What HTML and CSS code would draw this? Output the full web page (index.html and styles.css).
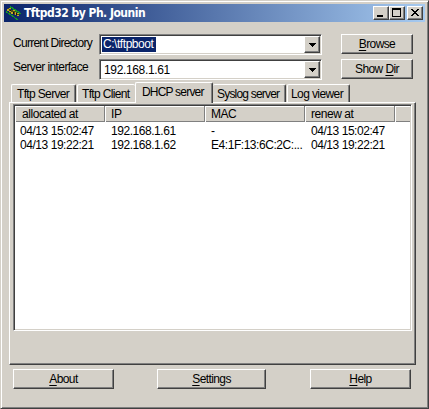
FILE: index.html
```html
<!DOCTYPE html>
<html lang="en">
<head>
<meta charset="utf-8">
<title>Tftpd32 by Ph. Jounin</title>
<link rel="stylesheet" href="styles.css">
</head>
<body>
<main class="window">
  <header class="titlebar">
    <svg class="app-icon" width="16" height="16" viewBox="0 0 16 16" shape-rendering="crispEdges">
      <path d="M2 3h3v2h3v1h3v2h2v3h-2v-1H8V9H6V8H3V6H2z" fill="#4a4a1c"/>
      <path d="M1 4h2v2H1zM3 3h2v1H3zM3 6h2v1H3zM5 7h2v2H5zM7 5h2v1H7zM9 7h1v3H9zM11 8h2v1h-2zM11 10h2v1h-2z" fill="#c0ac20"/>
      <path d="M4 5h1v1H4zM7 7h1v2H7zM10 8h1v2h-1z" fill="#111"/>
      <path d="M4 1h1v1h2v1h1v1h2v1h1v1h2v1h1v1h1v1h-2V8h-1V7h-2V6H9V5H7V4H6V3H4zM0 6h1v1h1v1h2v1h1v1h2v1h1v1h1v1h2v1h1v1h-2v-1H9v-1H8v-1H6v-1H5v-1H3V9H2V8H0z" fill="#129d20"/>
    </svg>
    <h1 class="title">Tftpd32 by Ph. Jounin</h1>
    <div class="controls">
      <button class="control" aria-label="Minimize"><svg width="12" height="10" shape-rendering="crispEdges"><path d="M2 7h6v2H2z"/></svg></button>
      <button class="control" aria-label="Maximize"><svg width="12" height="10" shape-rendering="crispEdges"><path fill-rule="evenodd" d="M1 0h9v9H1zM2 2v6h7V2z"/></svg></button>
      <button class="control close" aria-label="Close"><svg width="12" height="10" shape-rendering="crispEdges"><path d="M2 1h2v1h1v1h2V2h1V1h2v1H9v1H8v1H7v1h1v1h1v1h1v1H8V7H7V6H5v1H4v1H2V7h1V6h1V5h1V4H4V3H3V2H2z"/></svg></button>
    </div>
  </header>

  <section class="form">
    <div class="form-row">
      <label class="label directory-label">Current Directory</label>
      <div class="combo"><span class="value selected">C:\tftpboot</span><button class="arrow" aria-label="Open"><svg width="7" height="4" shape-rendering="crispEdges"><path d="M0 0h7v1H6v1H5v1H4v1H3V3H2V2H1V1H0z"/></svg></button></div>
      <button class="button side"><span><u>B</u>rowse</span></button>
    </div>
    <div class="form-row">
      <label class="label interface-label">Server interface</label>
      <div class="combo"><span class="value address">192.168.1.61</span><button class="arrow" aria-label="Open"><svg width="7" height="4" shape-rendering="crispEdges"><path d="M0 0h7v1H6v1H5v1H4v1H3V3H2V2H1V1H0z"/></svg></button></div>
      <button class="button side"><span>Show <u>D</u>ir</span></button>
    </div>
  </section>

  <nav class="tabs">
    <div class="tab tab-server">Tftp Server</div>
    <div class="tab tab-client">Tftp Client</div>
    <div class="tab tab-dhcp active">DHCP server</div>
    <div class="tab tab-syslog">Syslog server</div>
    <div class="tab tab-log">Log viewer</div>
  </nav>
  <section class="panel">
    <div class="list">
      <div class="row head"><span>allocated at</span><span>IP</span><span>MAC</span><span>renew at</span><span></span></div>
      <div class="row"><span>04/13 15:02:47</span><span>192.168.1.61</span><span>-</span><span>04/13 15:02:47</span></div>
      <div class="row"><span>04/13 19:22:21</span><span>192.168.1.62</span><span class="mac">E4:1F:13:6C:2C:...</span><span>04/13 19:22:21</span></div>
    </div>
  </section>

  <footer class="actions">
    <button class="button about"><span><u>A</u>bout</span></button>
    <button class="button settings"><span><u>S</u>ettings</span></button>
    <button class="button help"><span><u>H</u>elp</span></button>
  </footer>
</main>
</body>
</html>
```
FILE: styles.css
```css
* { box-sizing: border-box; }
body {
  margin: 0;
  font: 12px/14px "Liberation Sans", Arial, sans-serif;
  letter-spacing: -0.45px;
  color: #000;
}
button { font: inherit; letter-spacing: inherit; color: inherit; padding: 0; }
.window {
  width: 429px;
  height: 409px;
  padding: 2px;
  display: flex;
  flex-direction: column;
  background: #d4d0c8;
  border: 1px solid;
  border-color: #d4d0c8 #404040 #404040 #d4d0c8;
  box-shadow: inset 1px 1px #fff, inset -1px -1px #808080;
}
.titlebar {
  display: flex;
  align-items: center;
  height: 18px;
  margin: 1px 1px 0 1px;
  padding: 0 2px 0 2px;
  background: linear-gradient(90deg, #0a246a, #a6caf0);
}
.title {
  flex: 1;
  margin: 0 0 0 2px;
  color: #fff;
  font: bold 12px/18px "DejaVu Sans Condensed", "DejaVu Sans", sans-serif;
  letter-spacing: -0.5px;
  white-space: nowrap;
}
.controls { display: flex; }
.control {
  width: 16px;
  height: 14px;
  display: flex;
  background: #d4d0c8;
  border: 1px solid;
  border-color: #fff #404040 #404040 #fff;
  box-shadow: inset -1px -1px #808080;
  padding: 1px;
}
.close { margin-left: 2px; }

.form { display: flex; flex-direction: column; gap: 4px; margin: 12px 0 0 10px; }
.form-row { display: flex; height: 21px; }
.label { width: 86px; padding-top: 2px; white-space: nowrap; }
.directory-label { letter-spacing: -0.73px; padding-top: 2px; }
.interface-label { letter-spacing: -0.6px; padding-top: 1px; }
.combo {
  display: flex;
  width: 223px;
  height: 21px;
  padding: 1px;
  background: #fff;
  border: 1px solid;
  border-color: #808080 #fff #fff #808080;
  box-shadow: inset 1px 1px #404040, inset -1px -1px #d4d0c8;
}
.value { flex: 1; margin: 1px; padding: 1px 0 0 2px; line-height: 15px; }
.address { letter-spacing: -0.35px; }
.selected { flex: none; height: 15px; padding: 0 0 0 1px; background: #0a246a; color: #fff; width: 54px; margin-right: auto; }
.arrow, .button {
  display: flex;
  align-items: center;
  justify-content: center;
  background: #d4d0c8;
  border: 1px solid;
  border-color: #fff #404040 #404040 #fff;
  box-shadow: inset -1px -1px #808080;
}
.arrow { width: 16px; height: 17px; }
.button { height: 20px; letter-spacing: -0.6px; }
.side { width: 72px; margin-left: 19px; }
u { text-underline-offset: 2px; text-decoration-thickness: 1px; }

.tabs { display: flex; align-items: flex-end; height: 20px; margin: 2px 0 0 8px; position: relative; }
.tab {
  height: 18px;
  padding: 2px 0 0 5px;
  white-space: nowrap;
  border: 1px solid;
  border-color: #fff #404040 transparent #fff;
  border-bottom: 0;
  border-radius: 2px 2px 0 0;
  box-shadow: inset -1px 0 #808080;
}
.tab-server { width: 65px; letter-spacing: -0.65px; }
.tab-client { width: 58px; margin-left: 1px; padding-left: 4px; border-right: 0; box-shadow: none; letter-spacing: -0.65px; }
.tab-dhcp { width: 78px; letter-spacing: -0.8px; }
.tab-syslog { width: 73px; padding-left: 4px; border-left: 0; letter-spacing: -0.8px; }
.tab-log { width: 63px; margin-left: 1px; padding-left: 3px; letter-spacing: -0.6px; }
.active { height: 21px; margin-bottom: -1px; padding: 2px 0 0 6px; background: #d4d0c8; }

.panel {
  width: 407px;
  height: 263px;
  margin-left: 6px;
  padding: 1px 3px;
  border: 1px solid;
  border-color: #fff #404040 #404040 #fff;
  box-shadow: inset -1px -1px #808080;
}
.list {
  width: 399px;
  height: 227px;
  padding: 1px;
  background: #fff;
  border: 1px solid;
  border-color: #808080 #fff #fff #808080;
  box-shadow: inset 1px 1px #404040, inset -1px -1px #d4d0c8;
}
.row { display: grid; grid-template-columns: 90px 100px 100px 90px 15px; height: 14px; white-space: nowrap; }
.row > span { padding-left: 5px; }
.row > span:nth-child(n+2) { padding-left: 6px; }
.row > .mac { letter-spacing: -0.45px; }
.head { height: 16px; margin-bottom: 2px; background: #d4d0c8; border-bottom: 1px solid #808080; }
.head > span { padding-left: 7px; line-height: 16px; border-right: 1px solid #808080; box-shadow: inset 0 1px #fff, inset 1px 0 #fff; }
.head > span:last-child { border-right: 0; }

.actions { display: flex; margin: 4px 0 0 10px; }
.about { width: 101px; }
.settings { width: 109px; margin-left: 43px; }
.help { width: 101px; margin-left: 44px; }
```
